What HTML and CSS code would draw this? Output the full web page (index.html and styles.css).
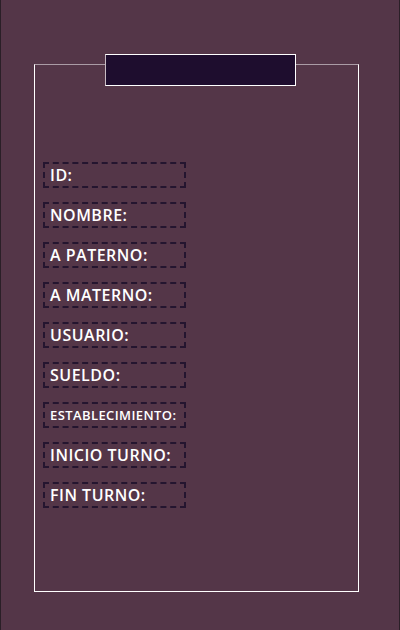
FILE: index.html
```html
<!DOCTYPE html>
<html lang="es">
<head>
<meta charset="utf-8">
<title>Empleado</title>
<link rel="stylesheet" href="styles.css">
</head>
<body>
<div class="page">
  <div class="card">
    <div class="card-title"></div>
    <div class="fields">
      <div class="field">ID:</div>
      <div class="field">NOMBRE:</div>
      <div class="field">A PATERNO:</div>
      <div class="field">A MATERNO:</div>
      <div class="field">USUARIO:</div>
      <div class="field">SUELDO:</div>
      <div class="field small">ESTABLECIMIENTO:</div>
      <div class="field">INICIO TURNO:</div>
      <div class="field">FIN TURNO:</div>
    </div>
  </div>
</div>
</body>
</html>
```
FILE: styles.css
```css
html, body {
  margin: 0;
  padding: 0;
  background: #543648;
}
.page {
  box-sizing: border-box;
  width: 400px;
  height: 630px;
  border-left: 1px solid #2a1f27;
  border-right: 1px solid #2a1f27;
  padding: 64px 0 0 33px;
}
.card {
  box-sizing: border-box;
  width: 325px;
  height: 528px;
  border: 1px solid #ffffff;
  border-top-color: #ab9ca6;
  display: flex;
  flex-direction: column;
}
.card-title {
  box-sizing: border-box;
  width: 191px;
  height: 32px;
  margin: -11px 0 0 70px;
  background: #1e0d2e;
  border: 1px solid #ffffff;
  border-left-color: #c8bcc4;
}
.fields {
  display: flex;
  flex-direction: column;
  gap: 14px;
  padding: 76px 0 0 8px;
}
.field {
  box-sizing: border-box;
  width: 143px;
  height: 26px;
  border: 2px dashed #24152f;
  padding: 0 0 0 5px;
  display: flex;
  align-items: center;
  color: #ffffff;
  font-family: "Open Sans", "DejaVu Sans", sans-serif;
  font-weight: 600;
  font-size: 16px;
  letter-spacing: 0.5px;
  white-space: nowrap;
}
.field.small {
  font-size: 13px;
  letter-spacing: 0.4px;
}
```
